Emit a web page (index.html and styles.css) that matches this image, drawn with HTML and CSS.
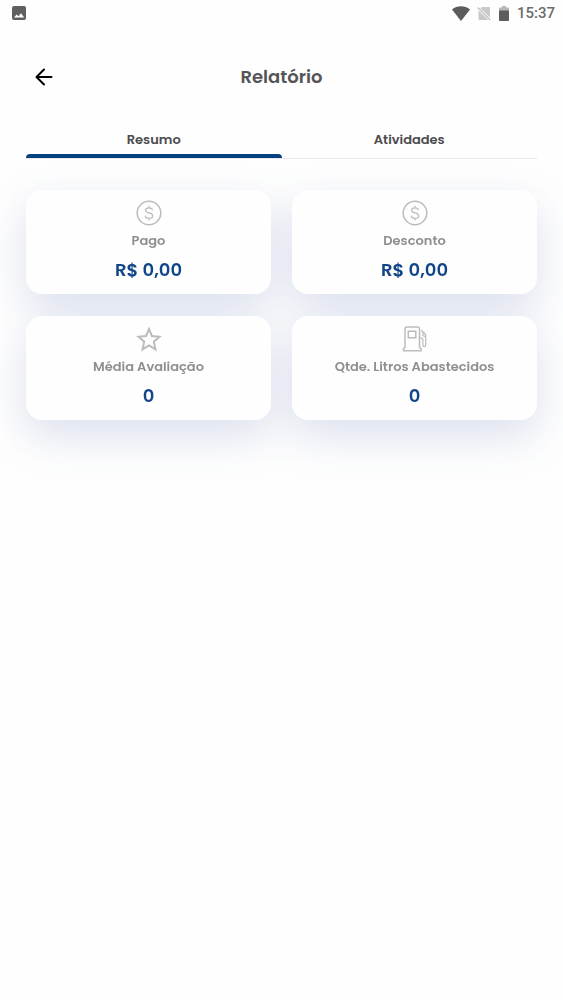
FILE: index.html
```html
<!DOCTYPE html>
<html lang="pt-BR">
<head>
<meta charset="utf-8">
<meta name="viewport" content="width=device-width, initial-scale=1">
<title>Relatório</title>
<link rel="stylesheet" href="styles.css">
</head>
<body>
<div class="status">
  <svg class="status-photo" width="14" height="14" viewBox="0 0 14 14" aria-hidden="true"><rect width="14" height="14" rx="2" fill="#606060"/><path d="M2 11.5 4.600 8.500l1.800 1.700L9 7.300l3.200 4.200z" fill="#fff"/></svg>
  <svg class="status-wifi" width="18" height="15" viewBox="0 0 18 15" aria-hidden="true"><path d="M0 3.500C5-.8 13-.8 18 3.500L9 15z" fill="#5c5c5c"/></svg>
  <svg class="status-sim" width="14" height="15" viewBox="0 0 14 15" aria-hidden="true"><path d="M5 1h7q1 0 1 1v9.500L3.500 2.500zM1.500 4.500 11.500 14H2.500q-1 0-1-1z" fill="#c9c9c9"/><path d="M.7 1.500 13.300 14" stroke="#c0c0c0" stroke-width="1.300"/></svg>
  <svg class="status-battery" width="10" height="15" viewBox="0 0 10 15" aria-hidden="true"><path d="M3 0h4v1.500h2q1 0 1 1V5H0V2.500q0-1 1-1h2z" fill="#b8b8b8"/><path d="M0 4.500h10V14q0 1-1 1H1q-1 0-1-1z" fill="#5c5c5c"/></svg>
  <time>15:37</time>
</div>
<header class="header">
  <button class="back" type="button" aria-label="Voltar"><svg width="18" height="18" viewBox="0 0 18 18" fill="none" stroke="#000" stroke-width="2" stroke-linecap="round" stroke-linejoin="round" aria-hidden="true"><path d="M16.500 9H1.500M9 1.500 1.500 9 9 16.500"/></svg></button>
  <h1>Relatório</h1>
</header>
<main class="content">
  <div class="tabs" role="tablist">
    <button class="tab active" type="button" role="tab" aria-selected="true">Resumo</button>
    <button class="tab" type="button" role="tab" aria-selected="false">Atividades</button>
  </div>
  <div class="cards">
    <section class="card">
      <svg class="icon" viewBox="0 0 26 26" aria-hidden="true"><circle cx="13" cy="13" r="11.800"/><path class="thin" d="M16.500 10.200C16.300 8.500 15 7.800 13 7.800c-2.200 0-3.500.9-3.500 2.500 0 3.500 7.200 1.800 7.200 5.400 0 1.600-1.500 2.600-3.700 2.600-2.300 0-3.700-1-3.800-2.700M13 5.700v2.100M13 18.300v2.100"/></svg>
      <h2>Pago</h2>
      <p>R$ 0,00</p>
    </section>
    <section class="card">
      <svg class="icon" viewBox="0 0 26 26" aria-hidden="true"><circle cx="13" cy="13" r="11.800"/><path class="thin" d="M16.500 10.200C16.300 8.500 15 7.800 13 7.800c-2.200 0-3.500.9-3.500 2.500 0 3.500 7.200 1.800 7.200 5.400 0 1.600-1.500 2.600-3.700 2.600-2.300 0-3.700-1-3.800-2.700M13 5.700v2.100M13 18.300v2.100"/></svg>
      <h2>Desconto</h2>
      <p>R$ 0,00</p>
    </section>
    <section class="card">
      <svg class="icon star" viewBox="0 0 26 26" aria-hidden="true"><path d="m13 3 2.900 7 7.600.7-5.700 5 1.700 7.600-6.500-4-6.500 4 1.700-7.600-5.700-5 7.600-.7z"/></svg>
      <h2>Média Avaliação</h2>
      <p>0</p>
    </section>
    <section class="card">
      <svg class="icon" viewBox="0 0 26 26" aria-hidden="true"><path d="M3 21.500V3q0-2 2-2h10.500q2 0 2 2v18.500l1.500 1v2.300H1.500v-2.300zM6.300 5.300h7.500v6.500H6.300z"/><path class="thin" d="M19.200 4.300 22.700 7.500q1 1 1 2.300V19q0 1.700-1.400 1.700T20.900 19v-5.500q0-1.300-1.300-1.300h-2M20.900 6v3.500l2.800 1.200"/></svg>
      <h2>Qtde. Litros Abastecidos</h2>
      <p>0</p>
    </section>
  </div>
</main>
</body>
</html>
```

FILE: styles.css
```css
* {
  box-sizing: border-box;
}

body {
  margin: 0;
  background: #fefefe;
  color: #4b4b4d;
  font-family: Poppins, Inter, "Open Sans", sans-serif;
}

h1, h2, p {
  margin: 0;
}

button {
  padding: 0;
  border: 0;
  background: none;
  color: inherit;
  font: inherit;
}

.status {
  display: flex;
  align-items: center;
  height: 26px;
  padding: 0 8px 0 12px;
  color: #6c6c6c;
  font: 500 15px/26px Roboto, sans-serif;
}

.status-photo {
  margin-right: auto;
}

.status-sim {
  margin: 0 8px 0 7px;
}

.status-battery {
  margin-right: 8px;
}

.header {
  display: grid;
  grid-template-columns: 36px 1fr 36px;
  align-items: center;
  height: 52px;
  margin-top: 25px;
  padding: 0 26px;
}

.back {
  display: flex;
  align-items: center;
  justify-content: center;
  height: 36px;
}

h1 {
  color: #555557;
  font-size: 18px;
  font-weight: 600;
  line-height: 28px;
  text-align: center;
}

.content {
  padding: 16px 26px 80px;
}

.tabs {
  display: flex;
  border-bottom: 1px solid #e9e9ed;
}

.tab {
  position: relative;
  flex: 1;
  height: 39px;
  padding-top: 2px;
  font-size: 13px;
  font-weight: 600;
  line-height: 20px;
}

.active::after {
  content: "";
  position: absolute;
  right: 0;
  bottom: 0;
  left: 0;
  height: 4px;
  border-radius: 4px 4px 0 0;
  background: #06417f;
}

.cards {
  display: grid;
  grid-template-columns: 1fr 1fr;
  gap: 22px 21px;
  margin-top: 31px;
  filter: drop-shadow(0 16px 22px rgba(38, 70, 150, 0.16));
}

.card {
  display: flex;
  flex-direction: column;
  align-items: center;
  min-height: 104px;
  padding: 10px 8px;
  border-radius: 16px;
  background: #fefefe;
}

.icon {
  width: 26px;
  height: 26px;
  fill: none;
  stroke: #bcbcc0;
  stroke-width: 1.5;
}

.thin {
  stroke-width: 1.2;
}

.star {
  stroke-width: 2;
}

h2 {
  margin-top: 5px;
  color: #8f8e91;
  font-size: 13px;
  font-weight: 600;
  line-height: 20px;
}

.card p {
  margin-top: 5px;
  color: #10458a;
  font-size: 18px;
  font-weight: 600;
  line-height: 28px;
}
```
